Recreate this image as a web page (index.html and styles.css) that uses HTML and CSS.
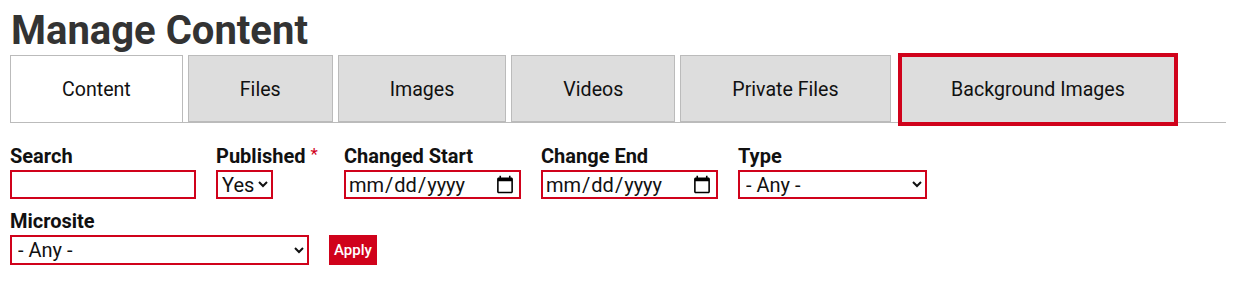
FILE: index.html
```html
<!DOCTYPE html>
<html lang="en">
<head>
<meta charset="utf-8">
<title>Manage Content</title>
<link rel="stylesheet" href="styles.css">
</head>
<body>
<h1 class="page-title">Manage Content</h1>
<ul class="tabs">
  <li class="tab is-active"><a href="#">Content</a></li>
  <li class="tab"><a href="#">Files</a></li>
  <li class="tab"><a href="#">Images</a></li>
  <li class="tab"><a href="#">Videos</a></li>
  <li class="tab"><a href="#">Private Files</a></li>
  <li class="tab is-focused"><a href="#">Background Images</a></li>
</ul>
<form class="filters">
  <div class="filter-row">
    <div class="field field-search">
      <label for="f-search">Search</label>
      <input id="f-search" type="text" class="text-input search-input">
    </div>
    <div class="field field-published">
      <label for="f-pub">Published <span class="req">*</span></label>
      <select id="f-pub" class="select-input pub-select"><option>Yes</option><option>No</option></select>
    </div>
    <div class="field">
      <label for="f-start">Changed Start</label>
      <input id="f-start" type="date" class="date-input">
    </div>
    <div class="field">
      <label for="f-end">Change End</label>
      <input id="f-end" type="date" class="date-input">
    </div>
    <div class="field">
      <label for="f-type">Type</label>
      <select id="f-type" class="select-input type-select"><option>- Any -</option></select>
    </div>
  </div>
  <div class="filter-row">
    <div class="field">
      <label for="f-site">Microsite</label>
      <select id="f-site" class="select-input site-select"><option>- Any -</option></select>
    </div>
    <div class="field field-action">
      <button type="button" class="apply-btn">Apply</button>
    </div>
  </div>
</form>
</body>
</html>
```
FILE: styles.css
```css
html, body {
  margin: 0;
  padding: 0;
  background: #fff;
}
body {
  padding: 10px;
  font-family: Roboto, "Liberation Sans", Arial, sans-serif;
  color: #111;
}
.page-title {
  margin: 0 0 3px 1px;
  font-size: 40px;
  line-height: 42px;
  font-weight: 700;
  color: #333;
}
.tabs {
  list-style: none;
  margin: 0;
  padding: 0;
  display: flex;
  align-items: flex-start;
  gap: 5px;
  border-bottom: 1px solid #bbb;
}
.tab a {
  display: flex;
  align-items: center;
  justify-content: center;
  box-sizing: border-box;
  height: 67px;
  padding: 1px 51px 0;
  background: #ddd;
  border: 1px solid #bbb;
  color: #111;
  font-size: 19.6px;
  text-decoration: none;
}
.tab.is-active a {
  background: #fff;
  border-bottom: none;
  margin-bottom: -1px;
}
.tab.is-focused {
  margin-left: 2px;
}
.tab.is-focused a {
  border: 4px solid #d0021b;
  height: 73px;
  margin-top: -2px;
  margin-bottom: -4px;
  padding: 0 49.5px;
}
.filters {
  margin-top: 23px;
}
.filter-row {
  display: flex;
  align-items: flex-end;
  gap: 20px;
  margin-bottom: 12px;
}
.field {
  display: flex;
  flex-direction: column;
  gap: 4px;
}
.field label {
  display: block;
  height: 20px;
  font-size: 20px;
  font-weight: 700;
  line-height: 20px;
  color: #111;
}
.req {
  color: #d0021b;
  font-weight: 400;
  font-size: 17px;
  line-height: 1;
  vertical-align: top;
}
.field-published {
  min-width: 108px;
}
.text-input,
.date-input,
.select-input {
  box-sizing: border-box;
  height: 29px;
  border: 2px solid #d0021b;
  border-radius: 0;
  background: #fff;
  font-family: Roboto, "Liberation Sans", Arial, sans-serif;
  font-size: 20px;
  color: #111;
  margin: 0;
  padding: 0 2px;
  outline: none;
}
.search-input { width: 186px; }
.pub-select { width: 57px; padding: 0; }
.date-input { width: 177px; }
.type-select { width: 189px; }
.site-select { width: 299px; height: 30px; }
.apply-btn {
  box-sizing: border-box;
  height: 30px;
  padding: 0 5px;
  border: none;
  border-radius: 0;
  background: #d0021b;
  color: #fff;
  font-family: Roboto, "Liberation Sans", Arial, sans-serif;
  font-size: 15px;
  font-weight: 500;
}
```
